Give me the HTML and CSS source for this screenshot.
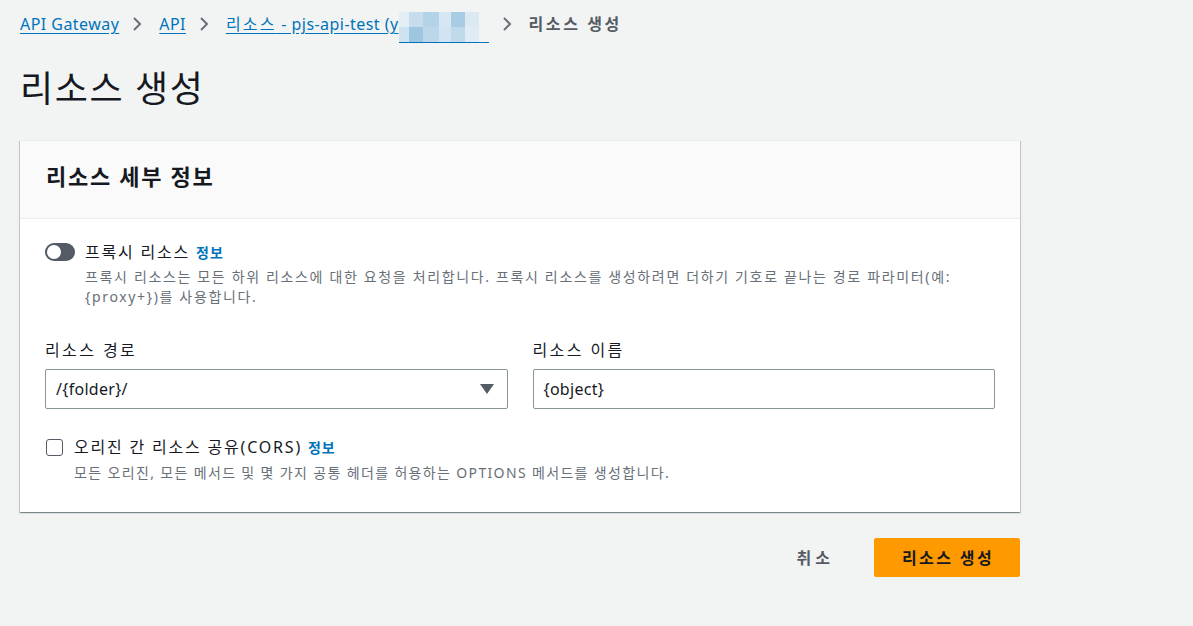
FILE: index.html
```html
<!DOCTYPE html>
<html lang="ko">
<head>
<meta charset="utf-8">
<title>리소스 생성</title>
<link rel="stylesheet" href="styles.css">
</head>
<body>
<div class="page">
  <nav class="breadcrumbs">
    <a class="crumb" href="#">API Gateway</a>
    <svg class="chev" width="10" height="16" viewBox="0 0 10 16"><path d="M2 2l6 6-6 6" fill="none" stroke="#687078" stroke-width="2"/></svg>
    <a class="crumb" href="#">API</a>
    <svg class="chev" width="10" height="16" viewBox="0 0 10 16"><path d="M2 2l6 6-6 6" fill="none" stroke="#687078" stroke-width="2"/></svg>
    <a class="crumb" href="#"><span class="ko">리소스</span>&nbsp;- pjs-api-test (y<span class="blur"><i class="b1"></i><i class="b2"></i><i class="b3"></i><i class="b4"></i><i class="b5"></i><i class="b6"></i><i class="b7"></i><i class="b8"></i><i class="b9"></i><i class="b10"></i><i class="b11"></i><i class="b12"></i></span></a>
    <svg class="chev" width="10" height="16" viewBox="0 0 10 16"><path d="M2 2l6 6-6 6" fill="none" stroke="#687078" stroke-width="2"/></svg>
    <span class="crumb-current">리소스 생성</span>
  </nav>

  <h1 class="title">리소스 생성</h1>

  <section class="card">
    <div class="card-header">
      <h2>리소스 세부 정보</h2>
    </div>
    <div class="card-body">
      <div class="option">
        <div class="option-row">
          <span class="toggle"><span class="knob"></span></span>
          <span class="option-label">프록시 리소스 <a class="info" href="#">정보</a></span>
        </div>
        <p class="desc toggle-desc">프록시 리소스는 모든 하위 리소스에 대한 요청을 처리합니다. 프록시 리소스를 생성하려면 더하기 기호로 끝나는 경로 파라미터(예:<br>{proxy+})를 사용합니다.</p>
      </div>

      <div class="fields">
        <div class="field">
          <label class="field-label">리소스 경로</label>
          <div class="select">
            <span>/{folder}/</span>
            <svg width="14" height="10" viewBox="0 0 14 10"><path d="M0 0h14L7 10z" fill="#545b64"/></svg>
          </div>
        </div>
        <div class="field">
          <label class="field-label">리소스 이름</label>
          <div class="input">{object}</div>
        </div>
      </div>

      <div class="option cors">
        <div class="option-row">
          <span class="checkbox"></span>
          <span class="option-label">오리진 간 리소스 공유(CORS) <a class="info" href="#">정보</a></span>
        </div>
        <p class="desc check-desc">모든 오리진, 모든 메서드 및 몇 가지 공통 헤더를 허용하는 OPTIONS 메서드를 생성합니다.</p>
      </div>
    </div>
  </section>

  <div class="actions">
    <button class="btn-link">취소</button>
    <button class="btn-primary">리소스 생성</button>
  </div>
</div>
</body>
</html>
```

FILE: styles.css
```css
html, body {
  margin: 0;
  padding: 0;
  background: #f2f3f3;
}
body {
  font-family: "Noto Sans", "Noto Sans CJK KR", sans-serif;
  color: #16191f;
  font-size: 14px;
}
.page {
  width: 1000px;
  padding-left: 20px;
}
.breadcrumbs {
  display: flex;
  align-items: center;
  padding-top: 12px;
  height: 24px;
  font-size: 16px;
  line-height: 24px;
  letter-spacing: 0.45px;
}
.crumb {
  color: #0073bb;
  text-decoration: underline;
  text-underline-offset: 3px;
  display: inline-flex;
  align-items: center;
  white-space: nowrap;
}
.ko {
  letter-spacing: 2.2px;
}
.chev {
  margin: 0 17px 0 13px;
  flex: none;
}
.crumb-current {
  color: #545b64;
  font-weight: 700;
  letter-spacing: 2.6px;
}
.blur {
  display: inline-grid;
  grid-template-columns: 10px 14px 16px 12px 14px 14px;
  grid-template-rows: 15px 15px;
  width: 90px;
  height: 30px;
  border-bottom: 1px solid #0073bb;
  margin-top: 6px;
}
.blur i { display: block; }
.b1 { background: #e3eef6; }
.b2 { background: #c7ddee; }
.b3 { background: #b4d2e8; }
.b4 { background: #d6e6f2; }
.b5 { background: #a9cce5; }
.b6 { background: #dbe9f3; }
.b7 { background: #cfe2ef; }
.b8 { background: #9fc6e1; }
.b9 { background: #bcd7ea; }
.b10 { background: #d2e4f1; }
.b11 { background: #c0d9eb; }
.b12 { background: #e0ecf5; }

.title {
  margin: 33px 0 31px 0;
  font-size: 36px;
  line-height: 40px;
  font-weight: 400;
  letter-spacing: 1.6px;
  color: #16191f;
}

.card {
  background: #fff;
  box-shadow: 0 1px 1px 0 rgba(0, 28, 36, 0.3), 1px 1px 1px 0 rgba(0, 28, 36, 0.15), -1px 1px 1px 0 rgba(0, 28, 36, 0.15);
  border-top: 1px solid #eaeded;
}
.card-header {
  background: #fafafa;
  border-bottom: 1px solid #eaeded;
  padding: 21px 25px 28px 26px;
}
.card-header h2 {
  margin: 0;
  font-size: 22px;
  line-height: 28px;
  font-weight: 700;
  letter-spacing: 1.7px;
}
.card-body {
  padding: 21px 25px 29px 25px;
}
.option-row {
  display: flex;
  align-items: center;
  height: 24px;
}
.option-label {
  font-size: 16px;
  line-height: 24px;
  color: #16191f;
  letter-spacing: 1.8px;
}
.info {
  color: #0073bb;
  font-size: 14px;
  font-weight: 700;
  text-decoration: none;
  letter-spacing: 1px;
}
.toggle {
  width: 30px;
  height: 18px;
  border-radius: 9px;
  background: #545b64;
  position: relative;
  margin-right: 10px;
  flex: none;
}
.knob {
  position: absolute;
  left: 2px;
  top: 2px;
  width: 14px;
  height: 14px;
  border-radius: 50%;
  background: #fff;
}
.desc {
  margin: 0;
  color: #687078;
  font-size: 14px;
  line-height: 20px;
  letter-spacing: 1.65px;
}
.toggle-desc {
  margin-top: 3px;
  padding-left: 40px;
}
.fields {
  display: grid;
  grid-template-columns: 1fr 1fr;
  column-gap: 25px;
  margin-top: 31px;
}
.field-label {
  display: block;
  font-size: 16px;
  line-height: 24px;
  color: #16191f;
  margin-bottom: 7px;
  letter-spacing: 2.4px;
}
.select, .input {
  box-sizing: border-box;
  height: 40px;
  border: 1px solid #879596;
  border-radius: 2px;
  background: #fff;
  font-size: 16px;
  line-height: 24px;
  padding: 7px 10px;
  color: #16191f;
  letter-spacing: 0.3px;
}
.select {
  display: flex;
  justify-content: space-between;
  align-items: center;
  padding-right: 13px;
}
.cors {
  margin-top: 26px;
}
.checkbox {
  box-sizing: border-box;
  width: 17px;
  height: 17px;
  border: 1px solid #545b64;
  border-radius: 3px;
  background: #fff;
  margin: 0 11px 0 1px;
  flex: none;
}
.check-desc {
  margin-top: 4px;
  padding-left: 29px;
  letter-spacing: 1.35px;
}
.actions {
  display: flex;
  justify-content: flex-end;
  align-items: center;
  margin-top: 26px;
}
.btn-link, .btn-primary {
  font-family: "Noto Sans", "Noto Sans CJK KR", sans-serif;
  font-size: 16px;
  font-weight: 700;
  line-height: 22px;
  border-radius: 2px;
  letter-spacing: 2.4px;
  cursor: pointer;
}
.btn-link {
  background: none;
  border: none;
  color: #545b64;
  padding: 8px 20px;
  margin-right: 20px;
  letter-spacing: 4px;
}
.btn-primary {
  background: #ff9900;
  border: 1px solid #ff9900;
  color: #16191f;
  height: 39px;
  width: 146px;
  padding: 0 0 0 2px;
}
```
